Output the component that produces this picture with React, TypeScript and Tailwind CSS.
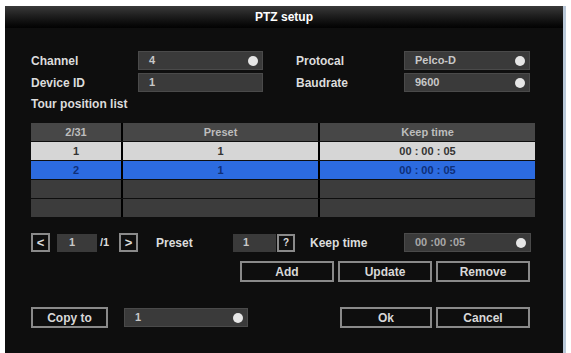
import React from "react";

const font = { fontFamily: '"Liberation Sans", Arial, sans-serif' };

function Field({
  value,
  width,
  dot = false,
}: {
  value: string;
  width: string;
  dot?: boolean;
}) {
  return (
    <div
      className={`${width} h-[19px] bg-[#3a3a3a] border border-[#4a4a4a] flex items-center justify-between pl-[10px] pr-[4px] text-[11px] text-[#c8c8c8]`}
    >
      <span>{value}</span>
      {dot && <span className="w-[10px] h-[10px] rounded-full bg-[#e6e6e6]" />}
    </div>
  );
}

function Btn({ label, width }: { label: string; width: string }) {
  return (
    <div
      className={`${width} h-[21px] border-2 border-[#8a8a8a] flex items-center justify-center text-[12px] text-[#d8d8d8] font-bold`}
    >
      {label}
    </div>
  );
}

const rows = [
  { n: "1", p: "1", t: "00 : 00 : 05", cls: "bg-[#d6d6d6] text-[#333]" },
  { n: "2", p: "1", t: "00 : 00 : 05", cls: "bg-[#2c6be0] text-[#0f2f78]" },
  { n: "", p: "", t: "", cls: "bg-[#3c3c3c]" },
  { n: "", p: "", t: "", cls: "bg-[#3c3c3c]" },
];

export default function App() {
  return (
    <div
      className="w-[571px] h-[353px] bg-white overflow-hidden flex pt-[6px] pl-[5px]"
      style={font}
    >
      <div className="w-[558px] h-[347px] bg-[#0e0e0e] flex flex-col">
        <div className="h-[22px] bg-gradient-to-b from-[#3a3a3a] to-[#030303] flex items-center justify-center text-white text-[12px] font-bold">
          PTZ setup
        </div>

        <div className="flex flex-col pl-[26px] pt-[23px] text-[12px] font-bold text-[#dcdcdc]">
          <div className="flex items-center">
            <span className="w-[107px]">Channel</span>
            <Field value="4" width="w-[125px]" dot />
            <span className="w-[108px] ml-[33px]">Protocal</span>
            <Field value="Pelco-D" width="w-[126px]" dot />
          </div>
          <div className="flex items-center mt-[3px]">
            <span className="w-[107px]">Device ID</span>
            <Field value="1" width="w-[125px]" />
            <span className="w-[108px] ml-[33px]">Baudrate</span>
            <Field value="9600" width="w-[126px]" dot />
          </div>
          <div className="h-[18px] mt-[3px] flex items-center">Tour position list</div>

          <div className="w-[504px] mt-[10px] flex flex-col gap-[1px] text-[11px] font-bold">
            <div className="h-[18px] flex bg-[#474747] text-[#bdbdbd]">
              <div className="w-[92px] flex items-center justify-center border-r-2 border-black">2/31</div>
              <div className="w-[197px] flex items-center justify-center border-r-2 border-black">Preset</div>
              <div className="flex-1 flex items-center justify-center">Keep time</div>
            </div>
            {rows.map((r, i) => (
              <div key={i} className={`h-[18px] flex ${r.cls}`}>
                <div className="w-[92px] flex items-center justify-center border-r-2 border-black">{r.n}</div>
                <div className="w-[197px] flex items-center justify-center border-r-2 border-black">{r.p}</div>
                <div className="flex-1 flex items-center justify-center">{r.t}</div>
              </div>
            ))}
          </div>

          <div className="flex items-center mt-[16px] h-[19px]">
            <div className="w-[19px] h-[19px] border-2 border-[#8a8a8a] flex items-center justify-center text-[13px] text-[#dcdcdc]">
              &lt;
            </div>
            <div className="ml-[7px] w-[40px] h-[18px] bg-[#3a3a3a] flex items-center pl-[12px] text-[11px] text-[#c8c8c8]">
              1
            </div>
            <span className="ml-[3px] w-[19px] text-[11px]">/1</span>
            <div className="w-[19px] h-[19px] border-2 border-[#8a8a8a] flex items-center justify-center text-[13px] text-[#dcdcdc]">
              &gt;
            </div>
            <span className="ml-[18px] w-[77px]">Preset</span>
            <div className="w-[43px] h-[18px] bg-[#3a3a3a] flex items-center pl-[10px] text-[11px] text-[#c8c8c8]">
              1
            </div>
            <div className="ml-[1px] w-[18px] h-[18px] border-2 border-[#8a8a8a] bg-[#111] flex items-center justify-center text-[10px] text-[#dcdcdc]">
              ?
            </div>
            <span className="ml-[15px] w-[94px]">Keep time</span>
            <div className="w-[127px] h-[19px] bg-[#3a3a3a] border border-[#4a4a4a] flex items-center justify-between pl-[10px] pr-[4px] text-[11px] text-[#a8a8a8]">
              <span className="whitespace-pre">00 :00 :05</span>
              <span className="w-[10px] h-[10px] rounded-full bg-[#e6e6e6]" />
            </div>
          </div>

          <div className="flex mt-[9px] ml-[209px] gap-[4px]">
            <Btn label="Add" width="w-[94px]" />
            <Btn label="Update" width="w-[94px]" />
            <Btn label="Remove" width="w-[94px]" />
          </div>

          <div className="flex items-center mt-[25px]">
            <Btn label="Copy to" width="w-[77px]" />
            <div className="ml-[16px]">
              <Field value="1" width="w-[124px]" dot />
            </div>
            <div className="ml-[92px] flex gap-[4px]">
              <Btn label="Ok" width="w-[92px]" />
              <Btn label="Cancel" width="w-[94px]" />
            </div>
          </div>
        </div>
      </div>
      <div className="w-[3px] h-full bg-[#b9c8d8]" />
    </div>
  );
}
